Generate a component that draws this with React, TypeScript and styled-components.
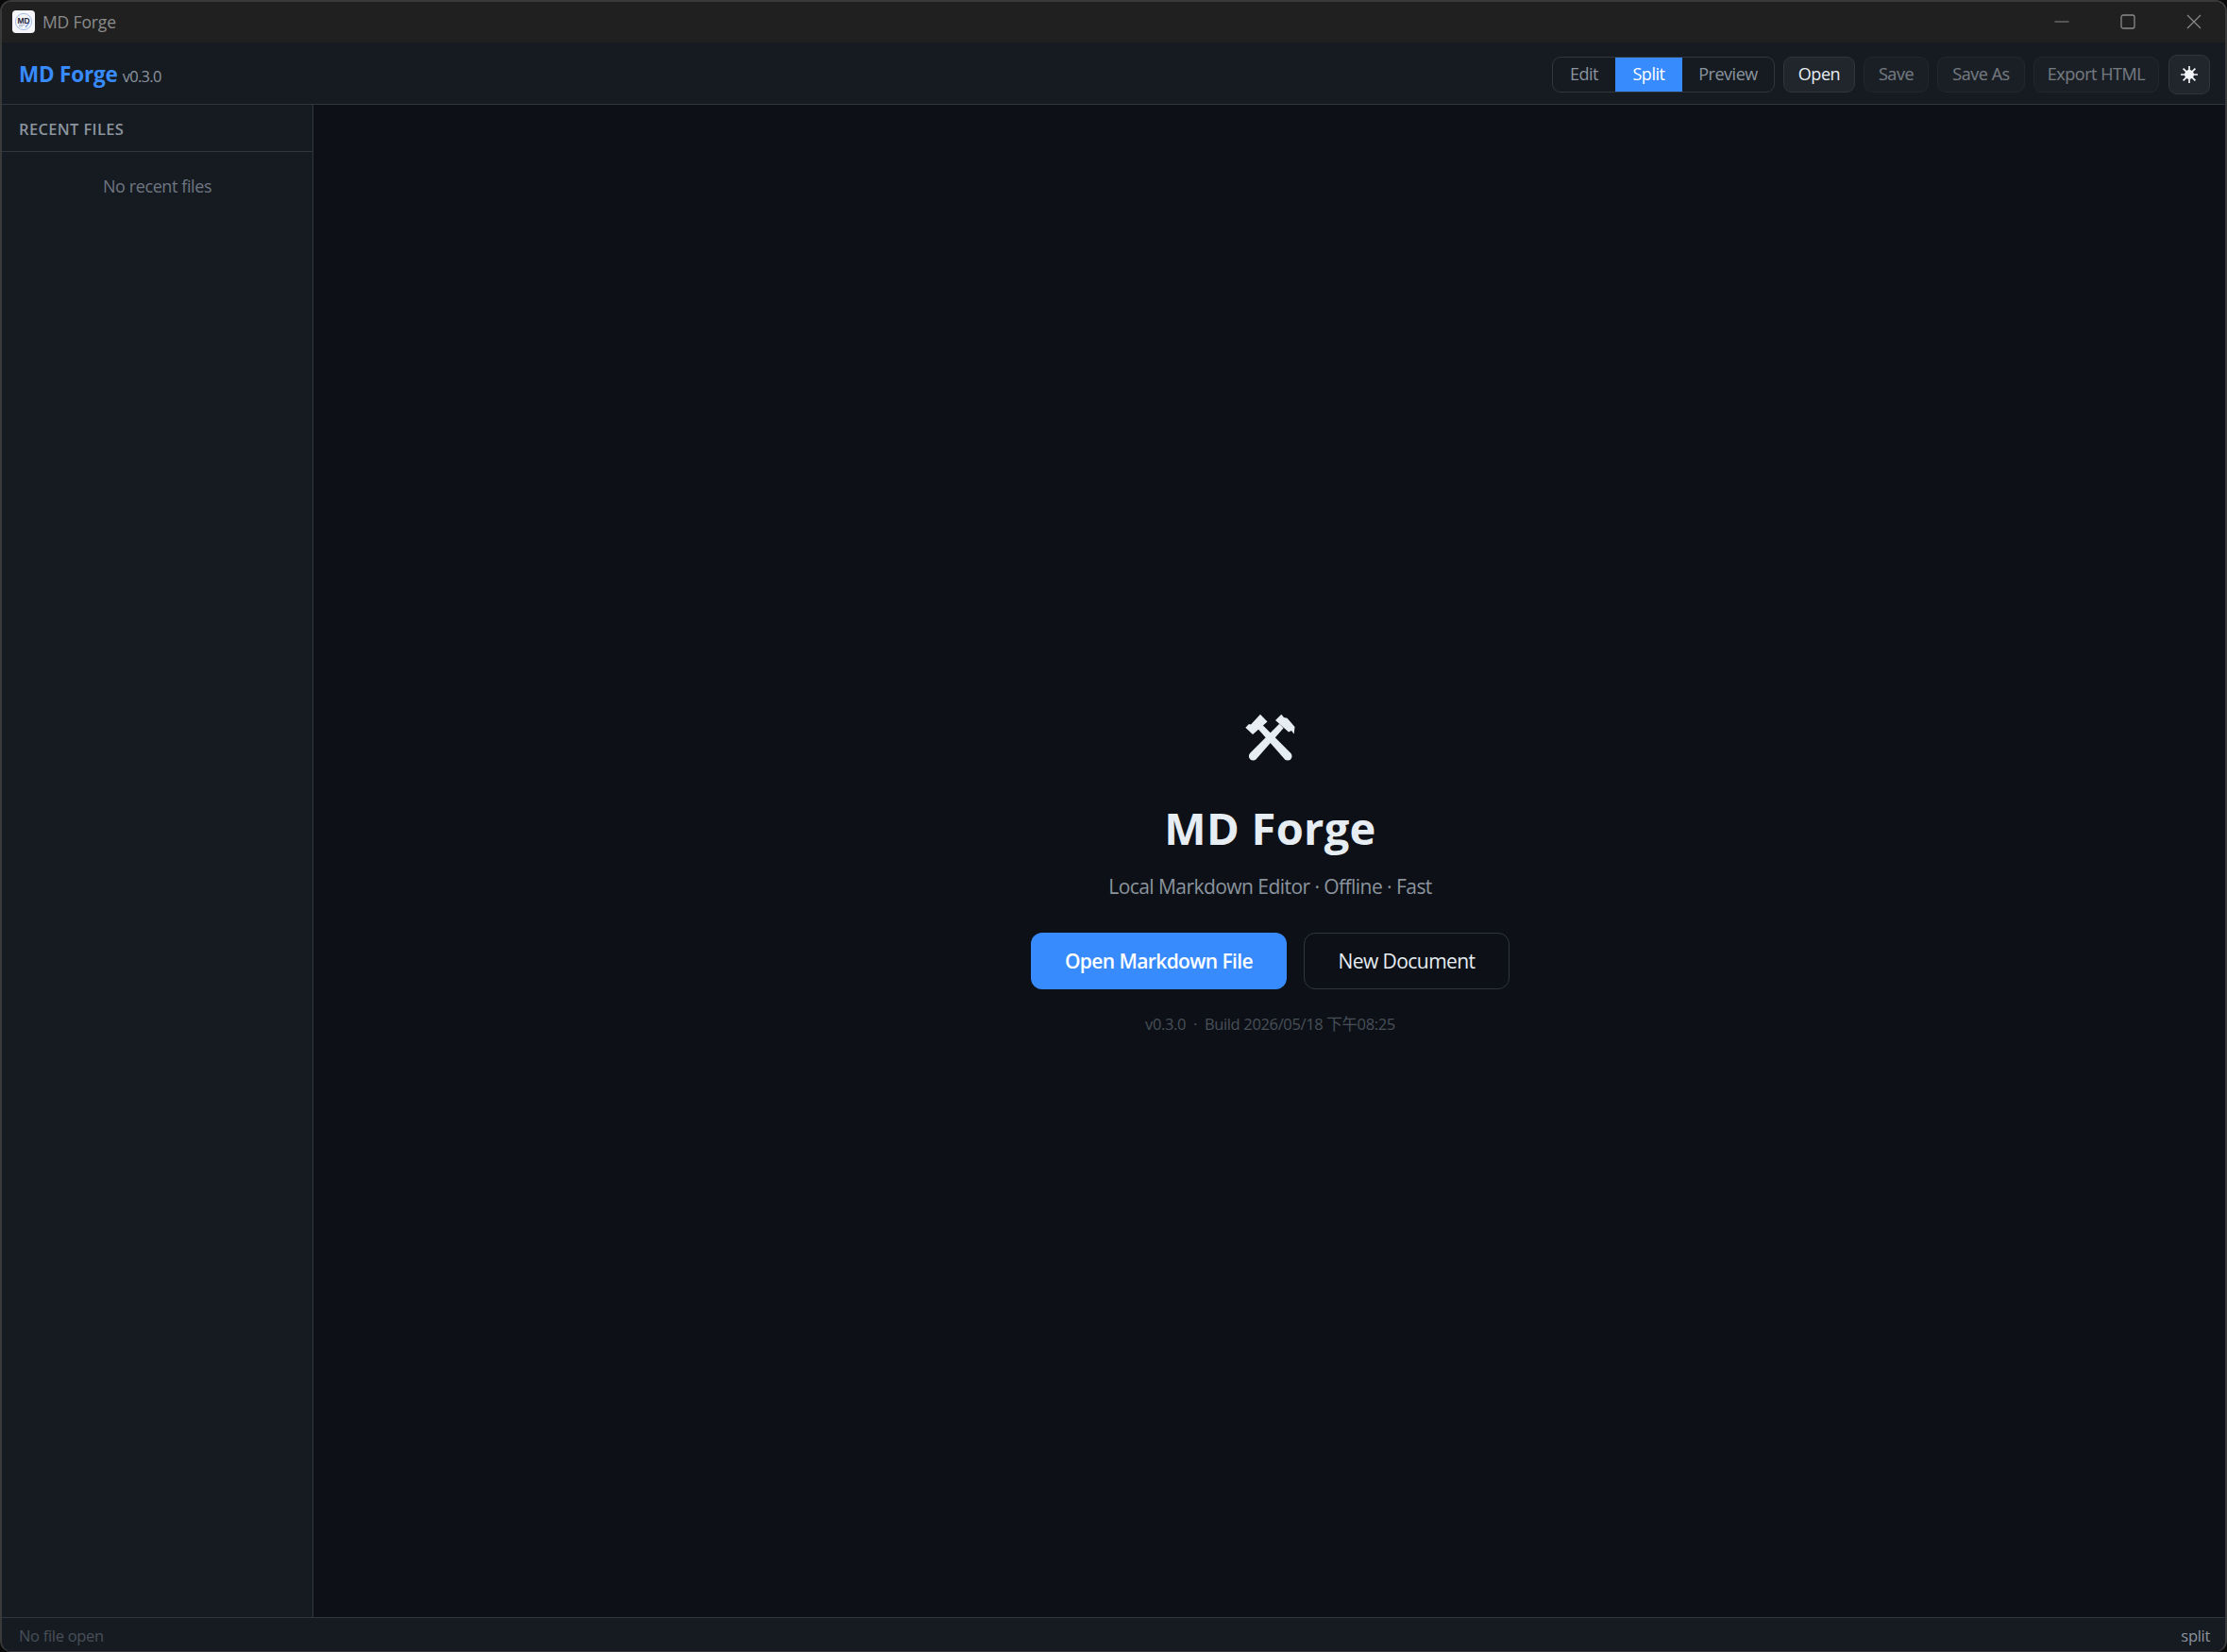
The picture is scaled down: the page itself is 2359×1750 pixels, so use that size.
import React from "react";
import styled, { createGlobalStyle } from "styled-components";

const FONT = `"Open Sans", "Noto Sans", "Noto Sans CJK SC", sans-serif`;

const Global = createGlobalStyle`
  html, body { margin: 0; padding: 0; background: #0a0a0a; }
  * { box-sizing: border-box; }
  #root { height: 1750px; width: 2359px; }
`;

const Win = styled.div`
  width: 2359px;
  height: 1750px;
  display: flex;
  flex-direction: column;
  overflow: hidden;
  border: 2px solid #3a3a3a;
  border-bottom-width: 1px;
  border-radius: 12px;
  background: #0d1117;
  font-family: ${FONT};
`;

const TitleBar = styled.div`
  height: 43px;
  flex: none;
  background: #202020;
  display: flex;
  align-items: center;
  padding: 0 0 2px 11px;
`;

const AppIcon = styled.svg`
  width: 24px;
  height: 24px;
  flex: none;
`;

const WinTitle = styled.span`
  margin-left: 8px;
  font-size: 17.5px;
  letter-spacing: -0.15px;
  color: #8c8c8c;
  flex: 1;
`;

const Controls = styled.div`
  display: flex;
  margin-right: -2px;
`;

const Ctl = styled.button`
  width: 70px;
  height: 41px;
  display: flex;
  align-items: center;
  justify-content: center;
  background: none;
  border: 0;
  padding: 0;
  color: #8a8a8a;
`;

const Toolbar = styled.header`
  height: 66px;
  flex: none;
  background: #161b22;
  border-bottom: 1px solid #30363d;
  display: flex;
  align-items: center;
  padding: 2px 16px 0 18px;
`;

const Brand = styled.div`
  flex: 1;
  display: flex;
  align-items: baseline;
`;

const BrandName = styled.span`
  font-size: 22.5px;
  font-weight: 700;
  letter-spacing: -0.2px;
  color: #388bfd;
`;

const BrandVer = styled.span`
  margin-left: 5px;
  font-size: 16.5px;
  letter-spacing: -0.7px;
  color: #8b949e;
`;

const Actions = styled.div`
  display: flex;
  align-items: center;
  gap: 9px;
`;

const Segment = styled.div`
  display: flex;
  height: 38px;
  align-items: stretch;
  border: 1px solid #30363d;
  border-radius: 9px;
  overflow: hidden;
`;

const SegBtn = styled.button<{ $active?: boolean; $w: number }>`
  width: ${(p) => p.$w}px;
  padding: 0 0 2px;
  border: 0;
  font: 400 18px ${FONT};
  letter-spacing: -0.45px;
  background: ${(p) => (p.$active ? "#388bfd" : "transparent")};
  color: ${(p) => (p.$active ? "#ffffff" : "#8b949e")};
`;

const ActionBtn = styled.button<{ $dim?: boolean; $w: number }>`
  width: ${(p) => p.$w}px;
  height: 38px;
  padding: 0 0 2px;
  border-radius: 9px;
  font: 400 18px ${FONT};
  letter-spacing: -0.45px;
  background: #21262d;
  border: 1px solid #30363d;
  color: #e6edf3;
  opacity: ${(p) => (p.$dim ? 0.45 : 1)};
`;

const ThemeBtn = styled.button`
  width: 44px;
  height: 42px;
  margin-left: 1px;
  padding: 0;
  display: flex;
  align-items: center;
  justify-content: center;
  border-radius: 9px;
  background: #21262d;
  border: 1px solid #30363d;
`;

const Body = styled.div`
  flex: 1;
  min-height: 0;
  display: flex;
`;

const Sidebar = styled.aside`
  width: 330px;
  flex: none;
  background: #161b22;
  border-right: 1px solid #30363d;
  display: flex;
  flex-direction: column;
`;

const SideHead = styled.div`
  height: 50px;
  padding: 2px 18px 0;
  display: flex;
  align-items: center;
  border-bottom: 1px solid #30363d;
  font-size: 16.5px;
  font-weight: 600;
  letter-spacing: 0.35px;
  color: #8b949e;
`;

const Empty = styled.div`
  padding-top: 24px;
  text-align: center;
  font-size: 18px;
  letter-spacing: -0.4px;
  color: #6e7681;
`;

const Main = styled.main`
  flex: 1;
  min-width: 0;
  display: flex;
  flex-direction: column;
  align-items: center;
  padding: 645px 0 0 2px;
`;

const Hammers = styled.svg`
  width: 54px;
  height: 50px;
  display: block;
`;

const Heading = styled.h1`
  margin: 41px 0 0;
  font-size: 47px;
  line-height: 60px;
  font-weight: 700;
  letter-spacing: 0.3px;
  color: #e6edf3;
`;

const Tagline = styled.p`
  margin: 17px 0 0;
  font-size: 21px;
  line-height: 30px;
  letter-spacing: -0.55px;
  color: #8b949e;
`;

const Cta = styled.div`
  display: flex;
  gap: 18px;
  margin-top: 34px;
`;

const PrimaryBtn = styled.button`
  width: 271px;
  height: 60px;
  padding: 0;
  border: 0;
  border-radius: 12px;
  background: #388bfd;
  color: #fff;
  font: 600 21px ${FONT};
  letter-spacing: -0.6px;
`;

const GhostBtn = styled.button`
  width: 218px;
  height: 60px;
  padding: 0;
  border: 1px solid #30363d;
  border-radius: 12px;
  background: transparent;
  color: #e6edf3;
  font: 400 21px ${FONT};
  letter-spacing: -0.55px;
`;

const BuildInfo = styled.div`
  margin-top: 24px;
  font-size: 16.5px;
  line-height: 26px;
  letter-spacing: -0.35px;
  color: #484f58;
  white-space: pre;
`;

const Status = styled.footer`
  height: 36px;
  flex: none;
  background: #161b22;
  border-top: 1px solid #30363d;
  display: flex;
  align-items: center;
  justify-content: space-between;
  padding: 1px 16px 0 18px;
  font-size: 16.5px;
  letter-spacing: -0.3px;
`;

const StatusLeft = styled.span`
  color: #484f58;
`;

const StatusRight = styled.span`
  color: #8b949e;
`;

export default function App() {
  return (
    <>
      <Global />
      <Win>
        <TitleBar>
          <AppIcon viewBox="0 0 24 24">
            <rect width="24" height="24" rx="4" fill="#f4f6fa" />
            <circle cx="12" cy="12" r="8.6" fill="none" stroke="#a9bdea" strokeWidth="1" />
            <text x="12" y="13.5" textAnchor="middle" fontSize="8.5" fontWeight="700" fontFamily="Liberation Sans" fill="#1d2540">MD</text>
            <path d="M7 15.5h6.5M7 17h4" stroke="#9aa6bf" strokeWidth=".8" />
            <path d="M14 18l4-5" stroke="#5b86d8" strokeWidth="1.2" />
          </AppIcon>
          <WinTitle>MD Forge</WinTitle>
          <Controls>
            <Ctl aria-label="Minimize">
              <svg width="16" height="16" viewBox="0 0 16 16"><path d="M.5 8h15" stroke="currentColor" strokeWidth="1" /></svg>
            </Ctl>
            <Ctl aria-label="Maximize">
              <svg width="16" height="16" viewBox="0 0 16 16"><rect x="1" y="1" width="14" height="14" rx="2" fill="none" stroke="currentColor" strokeWidth="1.3" /></svg>
            </Ctl>
            <Ctl aria-label="Close">
              <svg width="16" height="16" viewBox="0 0 16 16"><path d="M1 1l14 14M15 1L1 15" stroke="currentColor" strokeWidth="1.2" /></svg>
            </Ctl>
          </Controls>
        </TitleBar>
        <Toolbar>
          <Brand>
            <BrandName>MD Forge</BrandName>
            <BrandVer>v0.3.0</BrandVer>
          </Brand>
          <Actions>
            <Segment>
              <SegBtn $w={66}>Edit</SegBtn>
              <SegBtn $w={71} $active>Split</SegBtn>
              <SegBtn $w={97}>Preview</SegBtn>
            </Segment>
            <ActionBtn $w={76}>Open</ActionBtn>
            <ActionBtn $w={69} $dim>Save</ActionBtn>
            <ActionBtn $w={93} $dim>Save As</ActionBtn>
            <ActionBtn $w={133} $dim>Export HTML</ActionBtn>
            <ThemeBtn aria-label="Theme">
              <svg width="20" height="20" viewBox="0 0 20 20" fill="#f2f4f7">
                <circle cx="10" cy="10" r="5" />
                <path d="M10 1v18M1 10h18M3.6 3.6l12.8 12.8M16.4 3.6L3.6 16.4" stroke="#f2f4f7" strokeWidth="1.7" />
              </svg>
            </ThemeBtn>
          </Actions>
        </Toolbar>
        <Body>
          <Sidebar>
            <SideHead>RECENT FILES</SideHead>
            <Empty>No recent files</Empty>
          </Sidebar>
          <Main>
            <Hammers viewBox="0 0 54 50" fill="#e6edf3">
              <path d="M.3 14.7L4 11l2 .5L16 .7 23.5 8.5 8 22z" />
              <path d="M38.3 .7L32 7 46 19.5l3-1.5 2.7 3.5.8-7.5-8-9.3L41 4z" />
              <path d="M17.2 10.8L48.2 41.8A4.3 4.3 0 1 1 41.8 48.2L12.8 15.2z" />
              <path d="M36.2 10.8L5.2 41.8A4.3 4.3 0 1 0 11.6 48.2L40.6 15.2z" />
            </Hammers>
            <Heading>MD Forge</Heading>
            <Tagline>Local Markdown Editor · Offline · Fast</Tagline>
            <Cta>
              <PrimaryBtn>Open Markdown File</PrimaryBtn>
              <GhostBtn>New Document</GhostBtn>
            </Cta>
            <BuildInfo>v0.3.0  ·  Build 2026/05/18 下午08:25</BuildInfo>
          </Main>
        </Body>
        <Status>
          <StatusLeft>No file open</StatusLeft>
          <StatusRight>split</StatusRight>
        </Status>
      </Win>
    </>
  );
}
